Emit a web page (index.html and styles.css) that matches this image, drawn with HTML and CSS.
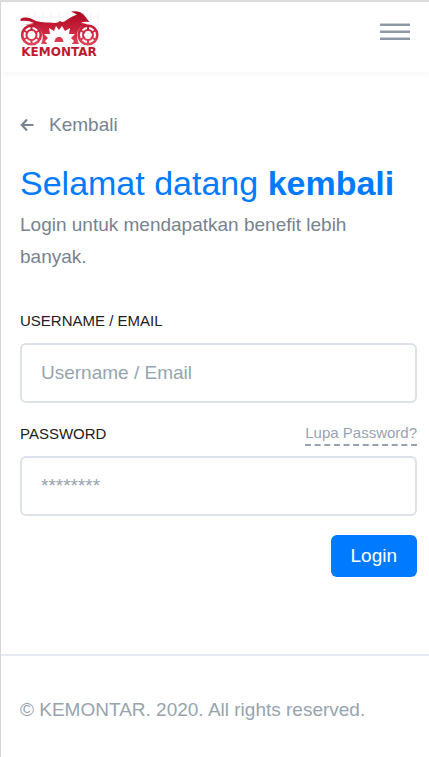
FILE: index.html
```html
<!DOCTYPE html>
<html lang="id">
<head>
<meta charset="utf-8">
<meta name="viewport" content="width=device-width, initial-scale=1">
<title>Kemontar - Login</title>
<link rel="stylesheet" href="styles.css">
</head>
<body>
<header class="header">
  <a class="brand" href="#" aria-label="Kemontar">
    <svg class="logo" viewBox="0 0 80 48" aria-hidden="true">
      <defs>
        <linearGradient id="red" gradientUnits="userSpaceOnUse" x1="0" y1="0" x2="0" y2="48">
          <stop offset="0" stop-color="#a8061f"/>
          <stop offset=".4" stop-color="#c9203a"/>
          <stop offset=".75" stop-color="#e04a5c"/>
          <stop offset="1" stop-color="#b0152b"/>
        </linearGradient>
      </defs>
      <path d="M8 3V37M15 3V37M23 3V37M31 3V37M39 3V37M47 3V37M55 3V37M63 3V37M71 3V37M78 3V37M2 7H79M2 15H79M2 23H79M2 31H79" fill="none" stroke="#f3f3f3"/>
      <path fill="url(#red)" d="M.5 9.500Q1 7.500 5 7.500Q10 7 14 10C19 13 27 12 35 13Q38 13 40 11Q43 13 45 11Q50 7 57 4.500L51 1.500Q60 0 64 5L69.500 12Q64 11 61 13Q65 13 68 15C60 16 57 20 57 26Q57 30 59 34H48V31H30V34H21C24 29 23 21 18 17C14 14 9 14 4 15L14 13Q8 10 .5 11Z"/>
      <path fill="#fff" d="M25 31L28 28L24 24L30 24L29 18L34 21L36 16L39 20L42 16L45 21L50 18L49 24L55 24L51 28L54 31L51 35H28Z"/>
      <path fill="url(#red)" d="M34.500 32Q35 27 39 27Q43 27 43.500 32Z"/>
      <g fill="none" stroke="url(#red)">
        <circle cx="11.500" cy="25" r="9.300" stroke-width="2.600"/>
        <circle cx="11.500" cy="25" r="5" stroke-width="2"/>
        <path d="M11.500 15V21M11.500 29V35M3 20L8 23M15 27L20 30M3 30L8 27M15 23L20 20" stroke-width="2"/>
        <circle cx="68" cy="25" r="9.300" stroke-width="2.600"/>
        <circle cx="68" cy="25" r="5" stroke-width="2"/>
        <path d="M68 15V21M68 29V35M60 20L65 23M71 27L76 30M60 30L65 27M71 23L76 20" stroke-width="2"/>
      </g>
      <text class="logo-text" x="39" y="46" text-anchor="middle">KEMONTAR</text>
    </svg>
  </a>
  <button class="menu" type="button" aria-label="Menu">
    <span class="bar"></span><span class="bar"></span><span class="bar"></span>
  </button>
</header>
<main class="main">
  <a class="back" href="#">
    <svg class="arrow" viewBox="0 0 14 14" aria-hidden="true"><path d="M7 1.500L1.800 7L7 12.500M2 7H13.500" fill="none" stroke="currentColor" stroke-width="2.200"/></svg>
    Kembali
  </a>
  <h1 class="title">Selamat datang <strong>kembali</strong></h1>
  <p class="lead">Login untuk mendapatkan benefit lebih banyak.</p>
  <form class="form">
    <div class="row"><label class="label" for="user">USERNAME / EMAIL</label></div>
    <input class="field" id="user" type="text" placeholder="Username / Email">
    <div class="row">
      <label class="label" for="pass">PASSWORD</label>
      <a class="forgot" href="#">Lupa Password?</a>
    </div>
    <input class="field" id="pass" type="password" placeholder="********">
    <button class="login" type="submit">Login</button>
  </form>
</main>
<footer class="footer">© KEMONTAR. 2020. All rights reserved.</footer>
</body>
</html>
```
FILE: styles.css
```css
* { box-sizing: border-box; }

body {
  margin: 0;
  min-height: 100vh;
  display: flex;
  flex-direction: column;
  border-top: 2px solid #dcdcdc;
  border-left: 1px solid #d5d5d5;
  background: #fff;
  color: #77838f;
  font: 19px/32px "Liberation Sans", Arial, sans-serif;
}

.header {
  display: flex;
  justify-content: space-between;
  align-items: flex-start;
  height: 70px;
  padding: 8px 19px 0;
  box-shadow: 0 2px 6px rgba(0, 0, 0, .04);
}

.brand, .logo { display: block; }
.logo { width: 80px; height: 48px; }
.logo-text {
  font: bold 12px "DejaVu Sans", sans-serif;
  fill: #bd1b31;
}

.menu {
  display: flex;
  flex-direction: column;
  gap: 4px;
  width: 30px;
  margin-top: 13px;
  padding: 0;
  border: 0;
  background: none;
}
.bar {
  height: 3px;
  width: 100%;
  border-top: 1px solid #c9cfd5;
  background: #8c98a4;
}

.main { padding: 37px 12px 77px 19px; }

.back {
  display: flex;
  align-items: center;
  gap: 15px;
  color: inherit;
  text-decoration: none;
}
.arrow { width: 14px; height: 14px; }

.title {
  margin: 18px 0 2px;
  color: #007bff;
  font-size: 34px;
  font-weight: 400;
  line-height: 48px;
}
.lead { margin: 0; }

.form {
  display: flex;
  flex-direction: column;
  margin-top: 36px;
}
.row {
  display: flex;
  justify-content: space-between;
  height: 34px;
  line-height: 24px;
}
.label {
  color: #1e2022;
  font-size: 15px;
}
.field {
  width: 100%;
  height: 60px;
  margin: 0 0 19px;
  padding: 0 19px;
  border: 2px solid #dde1ea;
  border-radius: 6px;
  background: #fff;
  color: #1e2022;
  font: inherit;
}
.field::placeholder { color: #97a4af; opacity: 1; }

.forgot {
  height: 24px;
  border-bottom: 2px dashed #97a4af;
  color: #97a4af;
  font-size: 15px;
  line-height: 22px;
  text-decoration: none;
}

.login {
  align-self: flex-end;
  height: 42px;
  padding: 0 20px;
  border: 0;
  border-radius: 6px;
  background: #007bff;
  color: #fff;
  font: inherit;
}

.footer {
  padding: 38px 19px;
  border-top: 2px solid #e7eaf3;
  color: #97a4af;
}
```
